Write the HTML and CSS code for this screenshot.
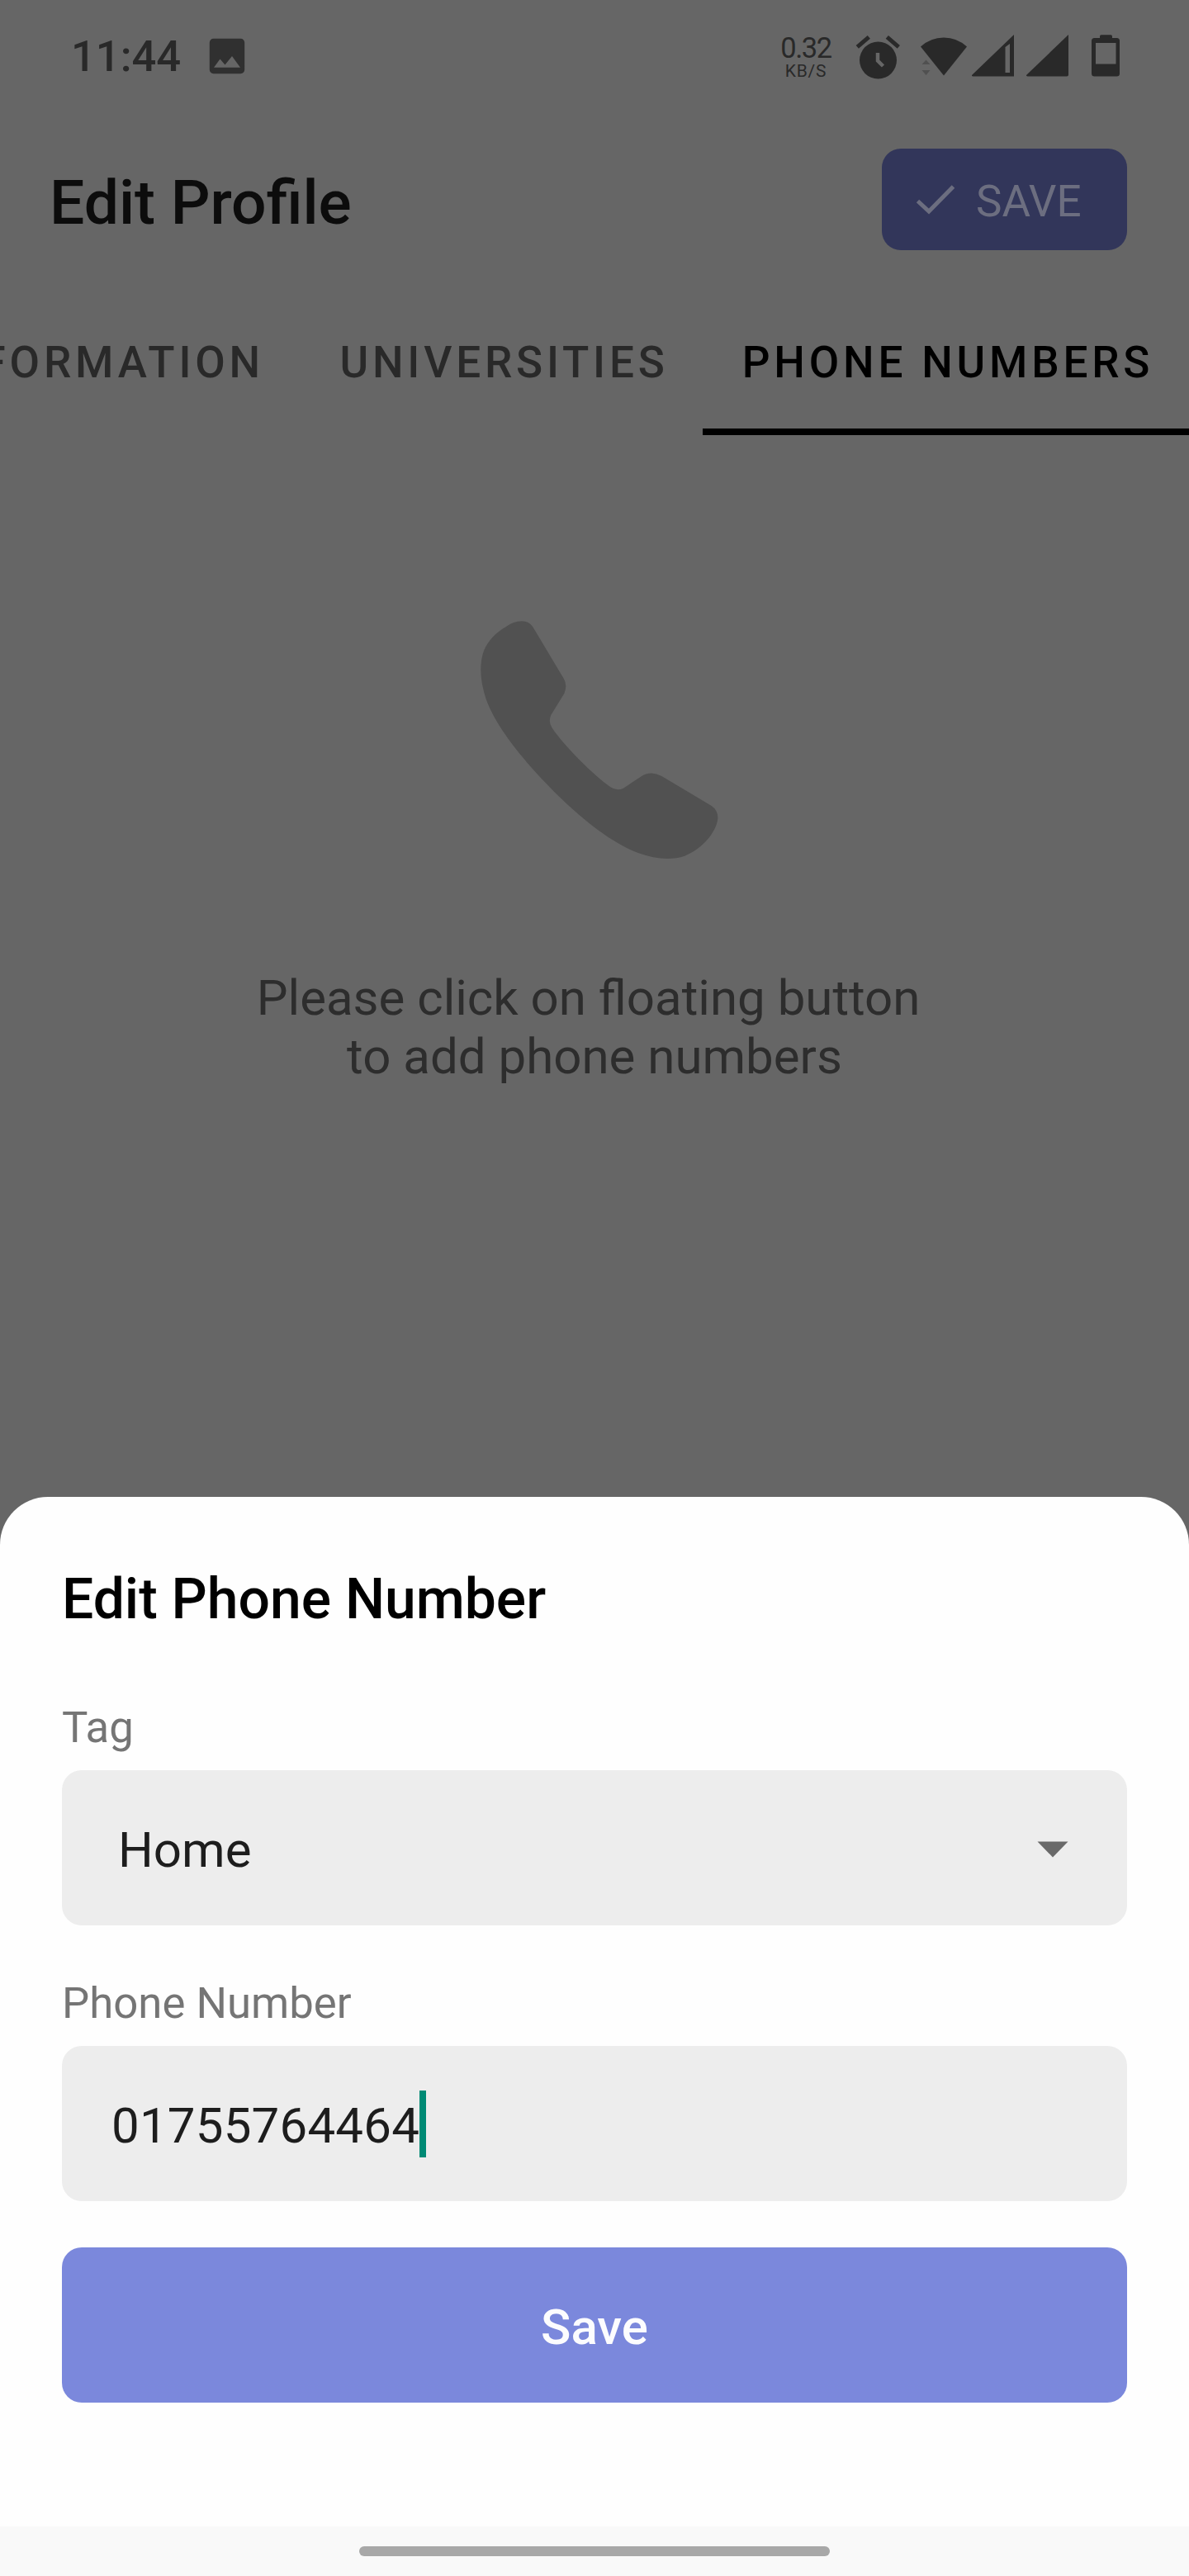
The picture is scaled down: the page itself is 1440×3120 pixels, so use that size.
FILE: index.html
```html
<!DOCTYPE html>
<html lang="en">
<head>
<meta charset="utf-8">
<title>Edit Profile</title>
<link rel="stylesheet" href="styles.css">
</head>
<body>
<div class="screen">
  <div class="status">
    <span class="clock">11:44</span>
    <svg class="picture" width="44" height="44" viewBox="0 0 44 44"><path fill-rule="evenodd" d="M5.500.8h33a4.700 4.700 0 0 1 4.700 4.700v33a4.700 4.700 0 0 1-4.700 4.700h-33a4.700 4.700 0 0 1-4.700-4.700v-33a4.700 4.700 0 0 1 4.700-4.700zM6 35.800h32L28 22l-8.500 10.500L13.500 25.500z"/></svg>
    <div class="rate"><span class="rate-value">0.32</span><span class="rate-unit">KB/S</span></div>
    <svg class="alarm" width="56" height="56" viewBox="1036 40 56 56"><circle cx="1063.500" cy="73" r="22.500"/><path class="line" stroke-width="5" d="M1038.300 56.800l14-12M1088.300 56.800l-14-12"/><path class="hand" d="M1063 64v9.500l6.500 6.500"/></svg>
    <svg class="wifi" width="58" height="56" viewBox="1114 40 58 56"><path d="M1115 56.500Q1127 45.500 1143 45.500T1171 56.500L1143 91.500z"/><path class="faint" d="M1116.500 78l5-5.500 5 5.500zM1116.500 85h10l-5 6z"/></svg>
    <svg class="signal-a" width="54" height="56" viewBox="1176 40 54 56"><path fill-rule="evenodd" d="M1228 42v50.500h-49.500q-2.500-.5-1-2zM1223 53l-5.500 4v31h5.500z"/></svg>
    <svg class="signal-b" width="54" height="56" viewBox="1242 40 54 56"><path d="M1294 42v48.500q0 2-2 2h-47.500q-2.500-.5-1-2z"/></svg>
    <svg class="battery" width="38" height="56" viewBox="1320 40 38 56"><path fill-rule="evenodd" d="M1332 46v-2q0-1.700 1.700-1.700h11.600q1.700 0 1.700 1.700v2h5.500q3.500 0 3.500 3.500v39.500q0 3.500-3.500 3.500h-27q-3.500 0-3.500-3.500v-39.500q0-3.500 3.500-3.500zM1327 52v25.500h24.500V52z"/></svg>
  </div>

  <header class="topbar">
    <h1 class="page-title">Edit Profile</h1>
    <button class="save-top">
      <svg width="48" height="40" viewBox="0 0 48 40"><path d="M2.500 21.500L16 34 45.500 4"/></svg>
      <span>SAVE</span>
    </button>
  </header>

  <nav class="tabs">
    <span class="tab tab-info">INFORMATION</span>
    <span class="tab tab-uni">UNIVERSITIES</span>
    <span class="tab tab-phone">PHONE NUMBERS</span>
  </nav>

  <main class="empty">
    <svg class="handset" width="360" height="360" viewBox="0 0 1080 1080"><path d="M220 116Q245 98 276 97Q302 97 316 118L428 305Q443 330 430 360L382 438Q371 463 386 485C430 550 530 650 598 700Q618 714 644 705L708 662Q744 638 784 660L965 768Q990 785 988 815C982 865 930 925 868 950C820 966 760 962 700 940C580 895 440 770 330 650C240 550 175 460 146 380C128 325 120 270 134 217C146 175 178 141 220 116z"/></svg>
    <p class="hint">Please click on floating button&nbsp;<br>to add phone numbers</p>
  </main>

  <section class="sheet">
    <h2 class="sheet-title">Edit Phone Number</h2>
    <div class="label label-tag">Tag</div>
    <div class="field select"><span>Home</span><svg width="38" height="20" viewBox="0 0 38 20"><path d="M.5.500h37L19 19.500z"/></svg></div>
    <div class="label label-number">Phone Number</div>
    <div class="field input"><span>01755764464</span><i class="caret"></i></div>
    <button class="save">Save</button>
  </section>
  <footer class="gesture"><div class="pill"></div></footer>
</div>
</body>
</html>
```

FILE: styles.css
```css
* { box-sizing: border-box; }
body { margin: 0; font-family: Roboto, "Liberation Sans", sans-serif; }
h1, h2, p { margin: 0; font-weight: 400; }
button { border: 0; padding: 0; font-family: inherit; }
svg { display: block; flex: none; }

.screen {
  width: 1440px;
  height: 3120px;
  display: flex;
  flex-direction: column;
  overflow: hidden;
  background: #666;
}

.status {
  height: 136px;
  display: flex;
  align-items: center;
  padding: 0 82px 0 86px;
  color: #292929;
  fill: #292929;
}
.clock { width: 167px; font-size: 52.5px; font-weight: 500; line-height: 62px; white-space: nowrap; }
.picture { fill: #303030; }
.rate { display: flex; flex-direction: column; align-items: center; width: 62px; margin-left: auto; margin-right: 29px; padding-top: 2px; white-space: nowrap; }
.rate-value { font-size: 34.5px; line-height: 34px; letter-spacing: -1.4px; }
.rate-unit { font-size: 21px; line-height: 22px; letter-spacing: 0.8px; }
.alarm .line { fill: none; stroke: #292929; }
.alarm .hand { fill: none; stroke: #666; stroke-width: 4.500; }
.wifi { margin-left: 22px; }
.wifi .faint { fill: #505050; }
.signal-a { margin-left: 4px; }
.signal-b { margin-left: 12px; }
.battery { margin-left: 24px; }

.topbar {
  height: 211px;
  display: flex;
  justify-content: space-between;
  align-items: flex-start;
  padding: 44px 75px 0 60px;
}
.page-title { margin-top: 4px; font-size: 75px; font-weight: 500; line-height: 123px; color: #0c0c0c; }
.save-top {
  width: 297px;
  height: 123px;
  display: flex;
  align-items: center;
  padding-left: 41px;
  border-radius: 23px;
  background: #32365a;
  color: #6c6e80;
  font-size: 53px;
  line-height: 62px;
}
.save-top svg { fill: none; stroke: #6c6e80; stroke-width: 5; }
.save-top span { margin: 4px 0 0 25px; }

.tabs {
  height: 180px;
  display: flex;
  justify-content: flex-end;
  font-size: 53px;
  font-weight: 500;
  letter-spacing: 4.800px;
  line-height: 160px;
  color: #292929;
  white-space: nowrap;
}
.tab { flex: none; padding-top: 12px; text-align: center; border-bottom: 8px solid transparent; }
.tab-info { padding-right: 45px; }
.tab-uni { width: 486px; padding-left: 5px; }
.tab-phone { width: 589px; padding-left: 5px; color: #000; border-bottom-color: #000; }

.empty { flex: 1; display: flex; flex-direction: column; align-items: center; padding-top: 193px; }
.handset { fill: #515151; }
.hint { margin-top: 93px; text-align: center; font-size: 60px; line-height: 71px; color: #2d2d2d; }

.sheet {
  height: 1247px;
  display: flex;
  flex-direction: column;
  padding: 84px 75px 0;
  background: #fefefe;
  border-radius: 58px 58px 0 0;
}
.sheet-title { font-size: 67.8px; font-weight: 500; line-height: 80px; color: #000; }
.label { font-size: 52.7px; line-height: 62px; color: #757575; }
.label-tag { margin-top: 84px; }
.label-number { margin-top: 63px; }
.field {
  height: 188px;
  margin-top: 21px;
  display: flex;
  align-items: center;
  border-radius: 24px;
  background: #ededed;
  color: #1d1d1d;
  font-size: 60px;
  line-height: 71px;
}
.field span { padding-top: 5px; }
.select { justify-content: space-between; padding: 0 71px 0 68px; }
.select svg { margin-top: 3px; fill: #696969; }
.input { padding-left: 60px; letter-spacing: 0.2px; }
.caret { width: 8px; height: 81px; background: #008a75; }
.save {
  height: 188px;
  margin-top: 56px;
  padding-top: 5px;
  border-radius: 24px;
  background: #7b88dc;
  color: #fcfcfe;
  font-size: 60px;
  font-weight: 500;
}

.gesture { height: 60px; flex: none; padding-top: 24px; background: #f9f9f9; }
.pill { width: 570px; height: 12px; margin: 0 auto; border-radius: 6px; background: #a8a8a8; }
```
